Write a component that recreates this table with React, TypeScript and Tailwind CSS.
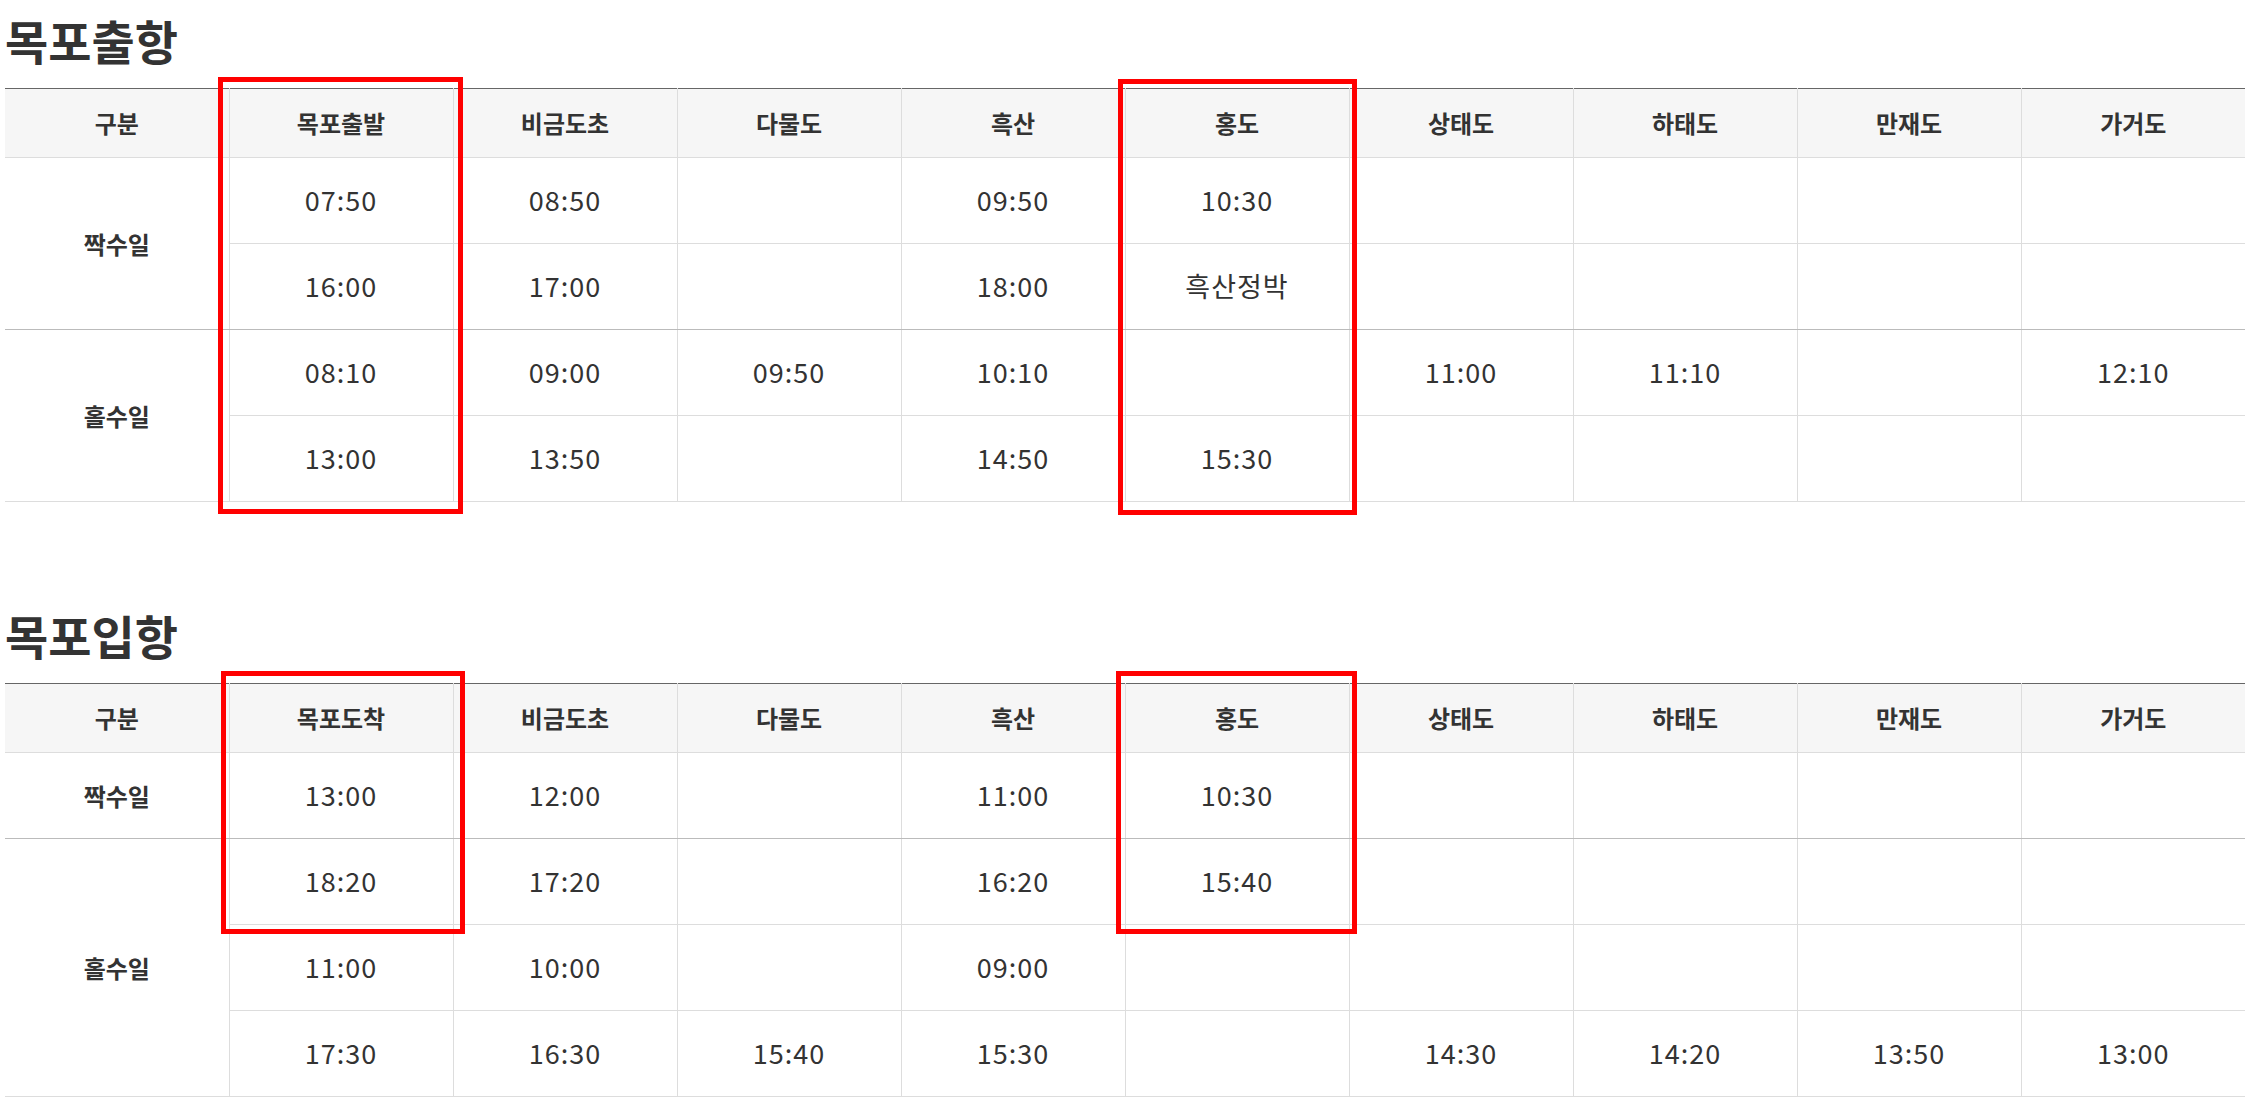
import React from 'react'

type Group = { label: string; rows: string[][] }

const OUT_HEAD = ['구분', '목포출발', '비금도초', '다물도', '흑산', '홍도', '상태도', '하태도', '만재도', '가거도']
const IN_HEAD = ['구분', '목포도착', '비금도초', '다물도', '흑산', '홍도', '상태도', '하태도', '만재도', '가거도']

const OUT_GROUPS: Group[] = [
  {
    label: '짝수일',
    rows: [
      ['07:50', '08:50', '', '09:50', '10:30', '', '', '', ''],
      ['16:00', '17:00', '', '18:00', '흑산정박', '', '', '', ''],
    ],
  },
  {
    label: '홀수일',
    rows: [
      ['08:10', '09:00', '09:50', '10:10', '', '11:00', '11:10', '', '12:10'],
      ['13:00', '13:50', '', '14:50', '15:30', '', '', '', ''],
    ],
  },
]

const IN_GROUPS: Group[] = [
  {
    label: '짝수일',
    rows: [['13:00', '12:00', '', '11:00', '10:30', '', '', '', '']],
  },
  {
    label: '홀수일',
    rows: [
      ['18:20', '17:20', '', '16:20', '15:40', '', '', '', ''],
      ['11:00', '10:00', '', '09:00', '', '', '', '', ''],
      ['17:30', '16:30', '15:40', '15:30', '', '14:30', '14:20', '13:50', '13:00'],
    ],
  },
]

function Schedule({ head, groups }: { head: string[]; groups: Group[] }) {
  return (
    <table className="w-[2240px] table-fixed border-collapse border-t border-t-[#666]">
      <thead>
        <tr>
          {head.map((h, i) => (
            <th key={h}
              className={`h-[69px] bg-[#f6f6f6] border-b border-b-[#ddd] text-[24px] font-bold text-[#333] ${i > 0 ? 'border-l border-l-[#ddd]' : ''}`}>
              {h}
            </th>
          ))}
        </tr>
      </thead>
      <tbody>
        {groups.map((g, gi) => {
          const lastGroup = gi === groups.length - 1
          const bottom = lastGroup ? 'border-b border-b-[#ddd]' : 'border-b border-b-[#bbb]'
          return g.rows.map((r, ri) => {
            const lastRow = ri === g.rows.length - 1
            return (
              <tr key={`${gi}-${ri}`}>
                {ri === 0 && (
                  <td rowSpan={g.rows.length}
                    className={`text-center text-[24px] font-bold text-[#333] ${bottom}`}>
                    {g.label}
                  </td>
                )}
                {r.map((c, ci) => (
                  <td key={ci}
                    className={`h-[86px] text-center text-[27px] tracking-[1px] text-[#333] border-l border-l-[#ddd] ${lastRow ? bottom : 'border-b border-b-[#ddd]'}`}>
                    {c}
                  </td>
                ))}
              </tr>
            )
          })
        })}
      </tbody>
    </table>
  )
}

export default function App() {
  return (
    <div className="relative min-h-[1113px] bg-white pl-[5px] font-['Noto_Sans_CJK_KR','Noto_Sans',sans-serif]">
      <section>
        <h2 className="pt-[11px] pb-[19px] text-[47px] leading-[58px] font-bold text-[#333]">목포출항</h2>
        <Schedule head={OUT_HEAD} groups={OUT_GROUPS} />
      </section>

      <section className="mt-[104px]">
        <h2 className="pb-[19px] text-[47px] leading-[58px] font-bold text-[#333]">목포입항</h2>
        <Schedule head={IN_HEAD} groups={IN_GROUPS} />
      </section>

      {/* red highlight boxes */}
      <div className="absolute left-[218px] top-[77px] w-[245px] h-[437px] border-[5px] border-[#ff0000]" />
      <div className="absolute left-[1118px] top-[79px] w-[239px] h-[436px] border-[5px] border-[#ff0000]" />
      <div className="absolute left-[221px] top-[671px] w-[244px] h-[263px] border-[5px] border-[#ff0000]" />
      <div className="absolute left-[1116px] top-[671px] w-[241px] h-[263px] border-[5px] border-[#ff0000]" />
    </div>
  )
}
